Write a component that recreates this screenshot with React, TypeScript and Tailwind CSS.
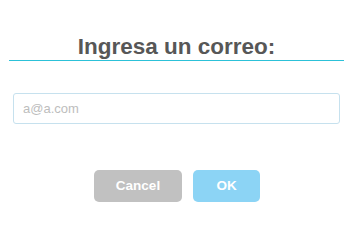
import React from "react";

export default function App() {
  return (
    <div className="w-[356px] h-[215px] bg-white flex flex-col overflow-hidden" style={{ fontFamily: '"Liberation Sans", Arial, sans-serif' }}>
      <div className="mt-[33px] ml-[9px] w-[335px] border-b border-[#2cc1d8] text-center text-[22.5px] leading-[27px] font-bold text-[#575757]">
        Ingresa un correo:
      </div>
      <div className="mt-[32px] ml-[13px] w-[327px] h-[31px]">
        <input
          type="text"
          placeholder="a@a.com"
          className="w-full h-full border border-[#c6e1ee] rounded-[3px] pl-[9px] text-[13px] text-[#575757] placeholder:text-[#bdbdbd] outline-none"
          style={{ fontFamily: '"Liberation Sans", Arial, sans-serif' }}
        />
      </div>
      <div className="mt-[46px] flex justify-center gap-[11px] pr-[2px]">
        <button className="w-[88px] h-[32px] rounded-[5px] bg-[#c1c1c1] text-white text-[13.5px] font-bold">
          Cancel
        </button>
        <button className="w-[67px] h-[32px] rounded-[5px] bg-[#8cd4f5] text-white text-[13.5px] font-bold">
          OK
        </button>
      </div>
    </div>
  );
}
